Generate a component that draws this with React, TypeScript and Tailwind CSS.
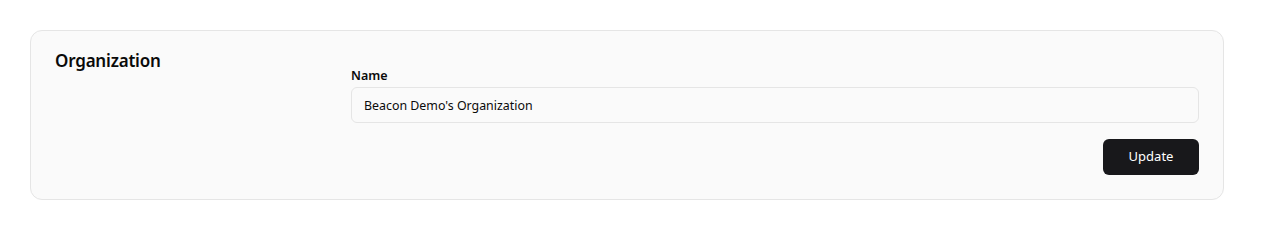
export default function App() {
  return (
    <div className="min-h-[242px] bg-white pt-[30px] pr-[42px] pl-[30px] font-['Noto_Sans',sans-serif] text-[#0a0a0a]">
      <div className="flex rounded-xl border border-[#e5e5e5] bg-[#fafafa] px-6 pt-[18px] pb-6">
        <div className="w-[296px] shrink-0">
          <h2 className="text-[17px] leading-6 font-semibold tracking-[-0.2px]">Organization</h2>
        </div>
        <div className="flex flex-1 flex-col">
          <label className="mt-[19px] text-[12.5px] leading-4 font-semibold">Name</label>
          <input
            className="mt-[3px] h-9 w-full rounded-md border border-[#e5e5e5] bg-[#fafafa] px-3 text-[12.4px] outline-none"
            defaultValue="Beacon Demo's Organization"
          />
          <div className="mt-4 flex justify-end">
            <button className="h-9 w-24 rounded-md bg-[#18181b] text-[13px] font-normal text-white">Update</button>
          </div>
        </div>
      </div>
    </div>
  );
}
